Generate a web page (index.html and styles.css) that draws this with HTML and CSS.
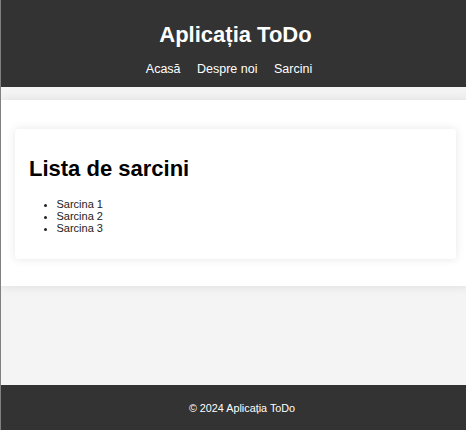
FILE: index.html
```html
<!DOCTYPE html>
<html lang="ro">
<head>
<meta charset="utf-8">
<title>Aplicația ToDo</title>
<link rel="stylesheet" href="styles.css">
</head>
<body>
<header class="site-header">
  <h1 class="site-title">Aplicația ToDo</h1>
  <nav class="site-nav">
    <a href="#">Acasă</a>
    <a href="#">Despre noi</a>
    <a href="#">Sarcini</a>
  </nav>
</header>
<main class="content">
  <section class="card">
    <h2 class="card-title">Lista de sarcini</h2>
    <ul class="task-list">
      <li>Sarcina 1</li>
      <li>Sarcina 2</li>
      <li>Sarcina 3</li>
    </ul>
  </section>
</main>
<footer class="site-footer">© 2024 Aplicația ToDo</footer>
</body>
</html>
```
FILE: styles.css
```css
html {
  margin: 0;
  padding: 0;
  overflow: hidden;
}

body {
  margin: 0;
  padding: 0;
  width: 470px;
  min-height: 100vh;
  box-sizing: border-box;
  display: flex;
  flex-direction: column;
  background: #f4f4f4;
  border-left: 1px solid #808080;
  font-family: "Liberation Sans", Arial, sans-serif;
  color: #222;
}

.site-header {
  background: #333;
  color: #fff;
  text-align: center;
  padding: 22px 0 11px;
}

.site-title {
  margin: 0 0 14px;
  font-size: 22px;
  font-weight: bold;
}

.site-nav {
  font-size: 12.5px;
}

.site-nav a {
  color: #fff;
  text-decoration: none;
  margin-right: 13px;
}

.content {
  margin-top: 13px;
  background: #fff;
  box-shadow: 0 0 10px rgba(0, 0, 0, 0.1);
  padding: 29px 14px 27px 14px;
}

.card {
  background: #fff;
  padding: 14px;
  border-radius: 3px;
  box-shadow: 0 0 10px rgba(0, 0, 0, 0.1);
}

.card-title {
  margin: 13px 0 16px;
  font-size: 22px;
  font-weight: bold;
  color: #000;
}

.task-list {
  margin: 11px 0;
  padding-left: 27.5px;
  font-size: 11px;
}

.site-footer {
  margin-top: auto;
  height: 45px;
  padding-left: 13px;
  display: flex;
  align-items: center;
  justify-content: center;
  background: #333;
  color: #fff;
  font-size: 10.8px;
}
```
